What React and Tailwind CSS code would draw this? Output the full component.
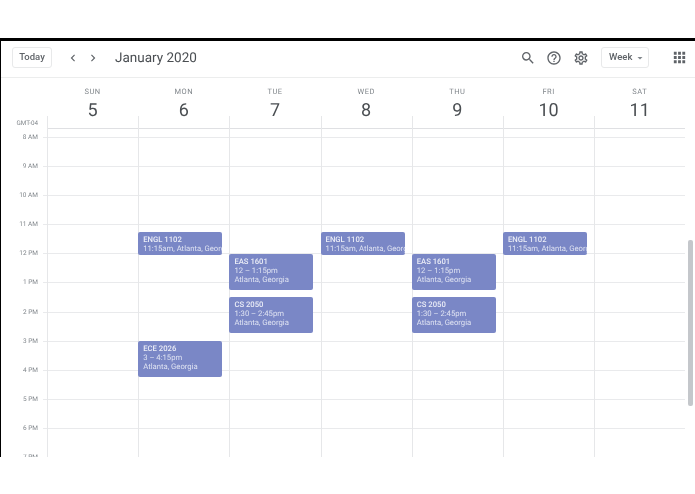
import { MdSearch, MdHelpOutline, MdOutlineSettings, MdApps, MdChevronLeft, MdChevronRight, MdArrowDropDown } from 'react-icons/md'

const days = [
  { name: 'SUN', num: 5, events: [] },
  {
    name: 'MON',
    num: 6,
    events: [
      { title: 'ENGL 1102', lines: ['11:15am, Atlanta, Georgia'], top: 'top-[116px]', height: 'h-[23px]' },
      { title: 'ECE 2026', lines: ['3 – 4:15pm', 'Atlanta, Georgia'], top: 'top-[225px]', height: 'h-[36px]' },
    ],
  },
  {
    name: 'TUE',
    num: 7,
    events: [
      { title: 'EAS 1601', lines: ['12 – 1:15pm', 'Atlanta, Georgia'], top: 'top-[138px]', height: 'h-[36px]' },
      { title: 'CS 2050', lines: ['1:30 – 2:45pm', 'Atlanta, Georgia'], top: 'top-[181px]', height: 'h-[36px]' },
    ],
  },
  {
    name: 'WED',
    num: 8,
    events: [{ title: 'ENGL 1102', lines: ['11:15am, Atlanta, Georgia'], top: 'top-[116px]', height: 'h-[23px]' }],
  },
  {
    name: 'THU',
    num: 9,
    events: [
      { title: 'EAS 1601', lines: ['12 – 1:15pm', 'Atlanta, Georgia'], top: 'top-[138px]', height: 'h-[36px]' },
      { title: 'CS 2050', lines: ['1:30 – 2:45pm', 'Atlanta, Georgia'], top: 'top-[181px]', height: 'h-[36px]' },
    ],
  },
  {
    name: 'FRI',
    num: 10,
    events: [{ title: 'ENGL 1102', lines: ['11:15am, Atlanta, Georgia'], top: 'top-[116px]', height: 'h-[23px]' }],
  },
  { name: 'SAT', num: 11, events: [] },
]

const hours = ['8 AM', '9 AM', '10 AM', '11 AM', '12 PM', '1 PM', '2 PM', '3 PM', '4 PM', '5 PM', '6 PM', '7 PM']

function EventCard({ event }) {
  return (
    <div className={`absolute left-[-1px] w-[84px] ${event.top} ${event.height} overflow-hidden rounded-[2px] bg-[#7a87c6] pl-[5px] pt-[2.5px] text-[7.7px] leading-[9.2px] whitespace-nowrap text-[#dfe3f2]`}>
      <p className="font-medium text-[#eceef7]">{event.title}</p>
      {event.lines.map((line) => (
        <p key={line}>{line}</p>
      ))}
    </div>
  )
}

function DayColumn({ day }) {
  return (
    <div className="relative w-[91.2px] shrink-0 border-l border-[#e6e7e9]">
      <div className="h-[12px]" />
      <div className="h-[9px] border-t border-[#dfe0e3]" />
      {hours.map((h) => (
        <div key={h} className="h-[29.1px] border-t border-[#e9eaec]" />
      ))}
      {day.events.map((event) => (
        <EventCard key={event.title + event.top} event={event} />
      ))}
    </div>
  )
}

export default function App() {
  return (
    <div className="h-[494px] w-[695px] overflow-hidden bg-white font-['Roboto',sans-serif] blur-[0.35px] [text-rendering:geometricPrecision]">
      <div className="h-[38px]" />
      <div className="relative h-[419px] overflow-hidden border-t-[3px] border-l border-black">
        {/* Toolbar */}
        <div className="flex h-[37px] items-center border-b border-[#eceded] pb-[3px] pl-[11px] pr-[7px]">
          <button className="h-[21px] w-[40px] rounded-[3px] border border-[#e8e9ea] text-[9.5px] font-medium text-[#5f6368]">
            Today
          </button>
          <MdChevronLeft className="ml-[14px] text-[14px] text-[#5f6368]" />
          <MdChevronRight className="ml-[6px] text-[14px] text-[#5f6368]" />
          <h1 className="ml-[15px] translate-y-[1px] text-[13.5px] text-[#4a4e52]">January 2020</h1>
          <div className="ml-auto flex items-center">
            <MdSearch className="text-[16px] text-[#5f6368]" />
            <MdHelpOutline className="ml-[10px] text-[16px] text-[#5f6368]" />
            <MdOutlineSettings className="ml-[11px] text-[16px] text-[#5f6368]" />
            <button className="ml-[12px] flex h-[21px] w-[48px] items-center rounded-[3px] border border-[#e8e9ea] pl-[7px] text-[9.5px] font-medium text-[#5f6368]">
              Week
              <MdArrowDropDown className="ml-[2px] text-[12px] text-[#80868b]" />
            </button>
            <MdApps className="ml-[22px] text-[17px] text-[#5f6368]" />
          </div>
        </div>

        {/* Day headings */}
        <div className="flex h-[38px] pl-[46px]">
          {days.map((day) => (
            <div key={day.name} className="flex w-[91.2px] shrink-0 flex-col items-center pt-[9px]">
              <span className="text-[7.5px] leading-[9px] tracking-[0.5px] text-[#80868b]">{day.name}</span>
              <span className="mt-[4px] text-[18px] leading-[22px] text-[#4a4e52]">{day.num}</span>
            </div>
          ))}
        </div>

        {/* Week grid */}
        <div className="flex">
          <div className="w-[46px] shrink-0 text-right text-[6.5px] text-[#80868b]">
            <div className="-mt-[2px] h-[23px] pt-[5px] pr-[9px] text-[6.3px] leading-[8px]">GMT-04</div>
            {hours.map((h) => (
              <div key={h} className="relative h-[29.1px]">
                <span className="absolute top-[-4px] right-[9px] leading-[8px] whitespace-nowrap">{h}</span>
                <span className="absolute top-0 right-0 h-px w-[4px] bg-[#e9eaec]" />
              </div>
            ))}
          </div>
          {days.map((day) => (
            <DayColumn key={day.name} day={day} />
          ))}
        </div>

        {/* Scrollbar */}
        <div className="absolute top-[199px] left-[687px] h-[166px] w-[5px] rounded-[2px] bg-[#c4c7cb]" />
      </div>
    </div>
  )
}
